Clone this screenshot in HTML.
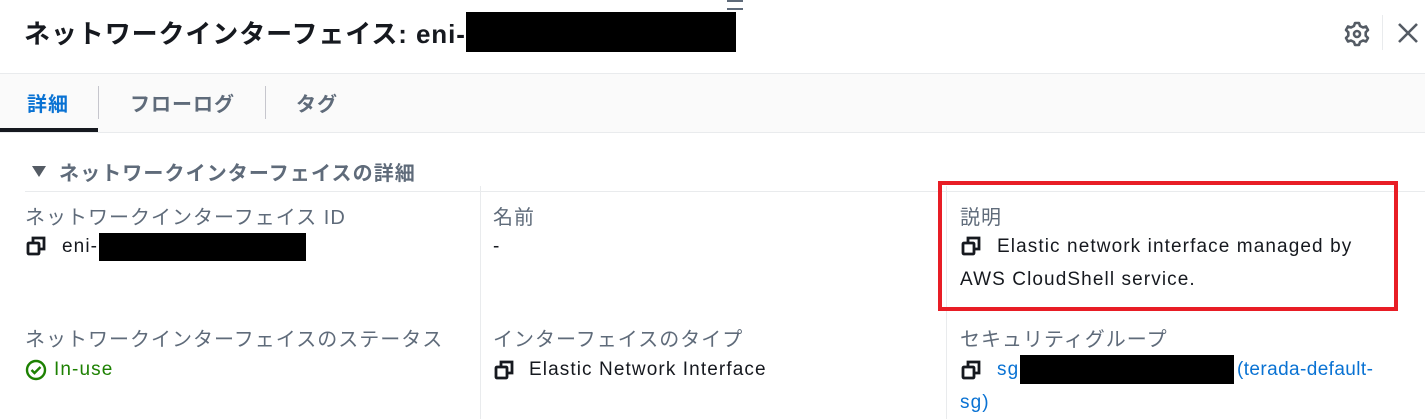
<!DOCTYPE html>
<html><head><meta charset="utf-8"><style>
body{margin:0;width:1425px;height:419px;overflow:hidden;background:#fff;font-family:"Liberation Sans","Noto Sans CJK JP",sans-serif;position:relative;color:#16191f}
.a{position:absolute;white-space:nowrap}
.lbl{color:#5f6b7a;font-size:20px;letter-spacing:1px}
.val{font-size:19px;letter-spacing:1.1px;color:#16191f}
.blk{position:absolute;background:#000}
.cp{position:absolute;width:20px;height:20px}
.lnk{color:#0972d3}
</style></head><body>
<div class="a" style="left:24px;top:14px;font-size:26px;font-weight:bold;color:#16191f;letter-spacing:0.9px">ネットワークインターフェイス: eni-</div>
<div class="blk" style="left:466px;top:12px;width:270px;height:40px"></div>
<div class="a" style="left:727px;top:0px;width:16px;height:10px;border-top:2px solid #5f6b7a;border-bottom:2px solid #5f6b7a;box-sizing:border-box"></div>
<svg class="a" style="left:1344px;top:21px" width="26" height="26" viewBox="0 0 26 26"><path d="M11 2h4l1 3 3 1.5 3-1 2 3.5-2.3 2.3v3.4L24 17l-2 3.5-3-1-3 1.5-1 3h-4l-1-3-3-1.5-3 1L2 17l2.3-2.3v-3.4L2 9l2-3.5 3 1L10 5z" fill="none" stroke="#545b64" stroke-width="2.6" stroke-linejoin="round"/><circle cx="13" cy="13" r="3" fill="none" stroke="#545b64" stroke-width="2.6"/></svg>
<div class="a" style="left:1382px;top:15px;width:1px;height:35px;background:#e9ebed"></div>
<svg class="a" style="left:1397px;top:22px" width="22" height="22"><path d="M2 2L20 20M20 2L2 20" stroke="#545b64" stroke-width="2.6"/></svg>
<div class="a" style="left:0;top:73px;width:1425px;height:58px;background:#fafafa;border-top:1px solid #e9ebed;border-bottom:1px solid #e9ebed"></div>
<div class="a" style="left:0;top:128px;width:98px;height:4px;background:#16191f"></div>
<div class="a" style="left:27px;top:88px;font-size:20px;font-weight:bold;color:#0972d3;letter-spacing:1px">詳細</div>
<div class="a" style="left:98px;top:86px;width:1px;height:33px;background:#c6c6cd"></div>
<div class="a" style="left:130px;top:88px;font-size:20px;font-weight:bold;color:#5f6b7a;letter-spacing:1px">フローログ</div>
<div class="a" style="left:265px;top:86px;width:1px;height:33px;background:#c6c6cd"></div>
<div class="a" style="left:296px;top:88px;font-size:20px;font-weight:bold;color:#5f6b7a;letter-spacing:1px">タグ</div>
<svg class="a" style="left:32px;top:165px" width="14" height="12"><path d="M0 1h14L7 12z" fill="#545b64"/></svg>
<div class="a" style="left:59px;top:157px;font-size:20px;font-weight:bold;color:#5f6b7a;letter-spacing:1.1px">ネットワークインターフェイスの詳細</div>
<div class="a" style="left:25px;top:191px;width:1400px;height:1px;background:#e9ebed"></div>
<div class="a" style="left:480px;top:186px;width:1px;height:233px;background:#e9ebed"></div>
<div class="a" style="left:946px;top:186px;width:1px;height:233px;background:#e9ebed"></div>

<div class="a lbl" style="left:25px;top:201px">ネットワークインターフェイス ID</div>
<svg class="cp" style="left:26px;top:236px" viewBox="0 0 20 20"><rect x="2" y="7" width="11" height="11" rx="1" fill="none" stroke="#16191f" stroke-width="2.8"/><path d="M7 6V2h11v11h-4" fill="none" stroke="#16191f" stroke-width="2.8"/></svg>
<div class="a val" style="left:62px;top:236px">eni-</div>
<div class="blk" style="left:99px;top:233px;width:207px;height:28px"></div>

<div class="a lbl" style="left:493px;top:201px">名前</div>
<div class="a val" style="left:493px;top:236px">-</div>

<div class="a lbl" style="left:960px;top:201px">説明</div>
<svg class="cp" style="left:961px;top:236px" viewBox="0 0 20 20"><rect x="2" y="7" width="11" height="11" rx="1" fill="none" stroke="#16191f" stroke-width="2.8"/><path d="M7 6V2h11v11h-4" fill="none" stroke="#16191f" stroke-width="2.8"/></svg>
<div class="a val" style="left:997px;top:236px">Elastic network interface managed by</div>
<div class="a val" style="left:960px;top:269px">AWS CloudShell service.</div>
<div class="a" style="left:938px;top:181px;width:460px;height:130px;border:4px solid #e81d25;box-sizing:border-box"></div>

<div class="a lbl" style="left:25px;top:323px">ネットワークインターフェイスのステータス</div>
<svg class="a" style="left:25px;top:359px" width="22" height="22"><circle cx="11" cy="11" r="9" fill="none" stroke="#1d8102" stroke-width="2.4"/><path d="M6.5 11l3 3 6-6" fill="none" stroke="#1d8102" stroke-width="2.4"/></svg>
<div class="a val" style="left:54px;top:359px;color:#1d8102">In-use</div>

<div class="a lbl" style="left:493px;top:323px">インターフェイスのタイプ</div>
<svg class="cp" style="left:494px;top:360px" viewBox="0 0 20 20"><rect x="2" y="7" width="11" height="11" rx="1" fill="none" stroke="#16191f" stroke-width="2.8"/><path d="M7 6V2h11v11h-4" fill="none" stroke="#16191f" stroke-width="2.8"/></svg>
<div class="a val" style="left:529px;top:359px">Elastic Network Interface</div>

<div class="a lbl" style="left:960px;top:323px">セキュリティグループ</div>
<svg class="cp" style="left:961px;top:360px" viewBox="0 0 20 20"><rect x="2" y="7" width="11" height="11" rx="1" fill="none" stroke="#16191f" stroke-width="2.8"/><path d="M7 6V2h11v11h-4" fill="none" stroke="#16191f" stroke-width="2.8"/></svg>
<div class="a val lnk" style="left:997px;top:359px">sg-</div>
<div class="blk" style="left:1020px;top:355px;width:214px;height:29px"></div>
<div class="a val lnk" style="left:1237px;top:359px;letter-spacing:0.4px">(terada-default-</div>
<div class="a val lnk" style="left:960px;top:392px">sg)</div>
</body></html>
